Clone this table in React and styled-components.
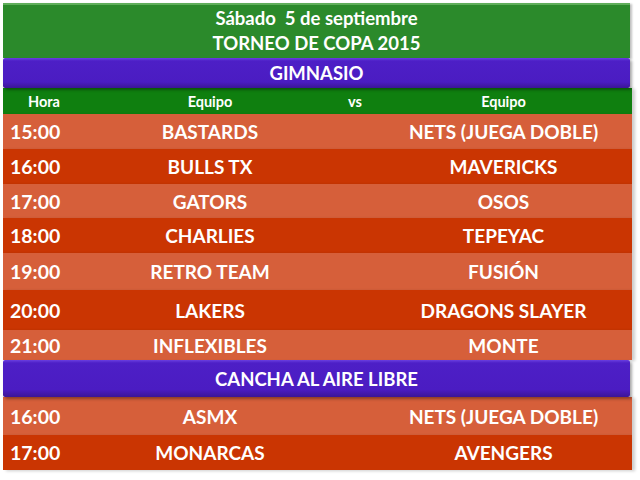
import React from "react";
import styled, { createGlobalStyle } from "styled-components";

const Global = createGlobalStyle`
  html, body { margin: 0; padding: 0; background: #ffffff; }
  body { font-family: "Lato", "Open Sans", "Liberation Sans", sans-serif; }
`;

const Page = styled.div`
  width: 640px;
  height: 480px;
  padding: 3px 0 0 3px;
  box-sizing: border-box;
  display: flex;
  flex-direction: column;
`;

const TitleBox = styled.div`
  width: 627px;
  height: 55px;
  box-sizing: border-box;
  background: #2b8a2b;
  border-top: 2px solid #5fae5a;
  box-shadow: 2px 1px 2px rgba(0, 0, 0, 0.25);
  display: flex;
  flex-direction: column;
  align-items: center;
  justify-content: center;
  color: #ffffff;
  font-weight: 700;
  font-size: 18.5px;
  line-height: 25px;
  padding-bottom: 1px;
  white-space: pre;
`;

const SectionBar = styled.div`
  width: 627px;
  height: ${(p) => p.$h}px;
  box-sizing: border-box;
  background: linear-gradient(#6a3fe0 0px, #4d1fc6 3px, #4b1cc2 80%, #3c1596 100%);
  border-radius: 2px;
  box-shadow: 2px 2px 3px rgba(0, 0, 0, 0.35);
  display: flex;
  align-items: center;
  justify-content: center;
  color: #ffffff;
  font-weight: 700;
  font-size: 18.5px;
  position: relative;
  z-index: 1;
`;

const Grid = styled.div`
  width: 629px;
  display: grid;
  grid-template-columns: 82px 250px 40px 1fr;
  align-items: center;
  height: ${(p) => p.$h}px;
  background: ${(p) => p.$bg};
  color: #ffffff;
  font-weight: 700;
  box-shadow: 3px 1px 3px rgba(0, 0, 0, 0.2);
`;

const HeadCell = styled.div`
  font-size: 14.5px;
  text-align: center;
  padding-top: 1px;
`;

const Time = styled.div`
  font-size: 19.5px;
  padding-left: 7px;
`;

const Team = styled.div`
  font-size: 19px;
  text-align: center;
  white-space: nowrap;
`;

const LIGHT = "#d65f3a";
const DARK = "#ca3502";

const gym = [
  ["15:00", "BASTARDS", "NETS (JUEGA DOBLE)", 35],
  ["16:00", "BULLS TX", "MAVERICKS", 35],
  ["17:00", "GATORS", "OSOS", 34],
  ["18:00", "CHARLIES", "TEPEYAC", 35],
  ["19:00", "RETRO TEAM", "FUSIÓN", 37],
  ["20:00", "LAKERS", "DRAGONS SLAYER", 40],
  ["21:00", "INFLEXIBLES", "MONTE", 30],
];

const outdoor = [
  ["16:00", "ASMX", "NETS (JUEGA DOBLE)", 38],
  ["17:00", "MONARCAS", "AVENGERS", 35],
];

function Row({ r, i }) {
  return (
    <Grid $h={r[3]} $bg={i % 2 === 0 ? LIGHT : DARK}>
      <Time>{r[0]}</Time>
      <Team>{r[1]}</Team>
      <div />
      <Team>{r[2]}</Team>
    </Grid>
  );
}

export default function App() {
  return (
    <>
      <Global />
      <Page>
        <TitleBox>
          <span>{"Sábado  5 de septiembre"}</span>
          <span>TORNEO DE COPA 2015</span>
        </TitleBox>
        <SectionBar $h={30}>GIMNASIO</SectionBar>
        <Grid $h={26} $bg="#0f7f0f">
          <HeadCell>Hora</HeadCell>
          <HeadCell>Equipo</HeadCell>
          <HeadCell>vs</HeadCell>
          <HeadCell>Equipo</HeadCell>
        </Grid>
        {gym.map((r, i) => (
          <Row key={i} r={r} i={i} />
        ))}
        <SectionBar $h={37}>CANCHA AL AIRE LIBRE</SectionBar>
        {outdoor.map((r, i) => (
          <Row key={i} r={r} i={i} />
        ))}
      </Page>
    </>
  );
}
